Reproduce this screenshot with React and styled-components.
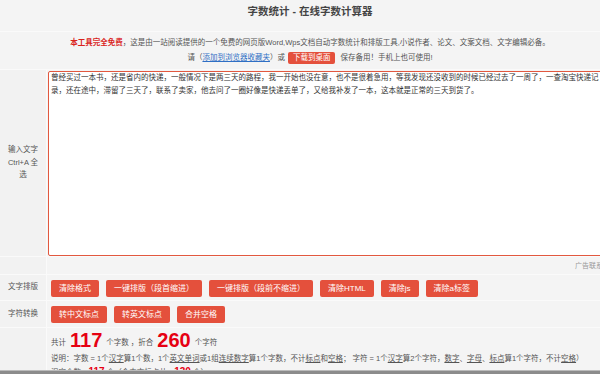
import React from 'react';
import styled, { createGlobalStyle } from 'styled-components';

const GlobalStyle = createGlobalStyle`
  html, body {
    margin: 0;
    padding: 0;
    overflow: hidden;
    background: #f4f4f4;
  }
  body {
    font-family: "Liberation Sans", "Noto Sans CJK SC", sans-serif;
    font-size: 7.5px;
    color: #555;
  }
`;

const Page = styled.div`
  width: 620px;
  background: #f4f4f4;
`;

const FullRow = styled.div`
  border-bottom: 1px solid #fafafa;
  text-align: center;
`;

const Title = styled.h1`
  margin: 0;
  height: 31px;
  padding-top: 5px;
  box-sizing: border-box;
  font-size: 10.5px;
  line-height: 13px;
  font-weight: bold;
  color: #444;
`;

const Notice = styled.div`
  padding: 3px 0 4px;
  line-height: 15px;
`;

const Free = styled.b`
  color: #d9231b;
`;

const FavLink = styled.a`
  color: #2f6fc4;
  text-decoration: underline;
`;

const SmallButton = styled.span`
  display: inline-block;
  margin: 0 5px 0 3px;
  padding: 0 5px;
  height: 12px;
  line-height: 12px;
  border-radius: 2px;
  background: #e4503c;
  color: #fff;
  vertical-align: middle;
`;

const Row = styled.div`
  display: grid;
  grid-template-columns: 47px 1fr;
  border-bottom: 1px solid #fafafa;
`;

const Label = styled.div`
  display: flex;
  align-items: center;
  justify-content: center;
  padding: 0 6px;
  border-right: 1px solid #fafafa;
  background: #f2f2f2;
  text-align: center;
  line-height: 12.5px;
  color: #555;
`;

const Cell = styled.div`
  padding: ${(p) => p.$pad || '5px 4px'};
  text-align: ${(p) => p.$align || 'left'};
`;

const InputBox = styled.textarea`
  display: block;
  width: 551px;
  height: 183px;
  margin: 1px 0 0 1px;
  padding: 0 22px 0 2px;
  border: 1px solid #e2583f;
  border-radius: 2px;
  background: #fff;
  font-family: "Liberation Sans", "Noto Sans CJK SC", sans-serif;
  font-size: 7.5px;
  line-height: 12.5px;
  color: #333;
  resize: none;
  outline: none;
  overflow: hidden;
`;

const AdNote = styled.span`
  color: #999;
  font-size: 7px;
  white-space: nowrap;
`;

const Buttons = styled.div`
  display: flex;
  gap: 7px;
`;

const Button = styled.button`
  height: 17px;
  padding: 0 8px;
  border: none;
  border-radius: 2px;
  background: #e4503c;
  color: #fff;
  font-family: "Liberation Sans", "Noto Sans CJK SC", sans-serif;
  font-size: 8px;
  line-height: 17px;
  white-space: nowrap;
`;

const Stats = styled.div`
  line-height: 21px;
  white-space: nowrap;
`;

const Big = styled.b`
  font-size: 20px;
  color: #e60012;
  margin: 0 4px;
  vertical-align: -2px;
`;

const Explain = styled.div`
  line-height: 12.5px;
  white-space: nowrap;
`;

const Under = styled.u`
  text-decoration: underline;
`;

const Mid = styled.b`
  font-size: 10px;
  color: #e60012;
`;

const BottomBar = styled.div`
  position: fixed;
  left: 0;
  right: 0;
  bottom: 0;
  height: 3px;
  border-top: 1px solid #bbb;
  background: #8c8c8c;
`;

const essay =
  '曾经买过一本书，还是省内的快递，一般情况下是两三天的路程，我一开始也没在意，也不是很着急用，等我发现还没收到的时候已经过去了一周了，一查淘宝快递记录，还在途中，滞留了三天了，联系了卖家，他去问了一圈好像是快递丢单了，又给我补发了一本，这本就是正常的三天到货了。';

const formatButtons = ['清除格式', '一键排版（段首缩进）', '一键排版（段前不缩进）', '清除HTML', '清除js', '清除a标签'];
const convertButtons = ['转中文标点', '转英文标点', '合并空格'];

export default function App() {
  return (
    <Page>
      <GlobalStyle />
      <FullRow>
        <Title>字数统计 - 在线字数计算器</Title>
      </FullRow>
      <FullRow>
        <Notice>
          <div>
            <Free>本工具完全免费</Free>，这是由一站阅读提供的一个免费的网页版Word,Wps文档自动字数统计和排版工具,小说作者、论文、文案文档、文字编辑必备。
          </div>
          <div>
            请（<FavLink>添加到浏览器收藏夹</FavLink>）或<SmallButton>下载到桌面</SmallButton>保存备用！手机上也可使用!
          </div>
        </Notice>
      </FullRow>
      <Row>
        <Label>输入文字 Ctrl+A 全选</Label>
        <Cell $pad="0">
          <InputBox defaultValue={essay} spellCheck={false} />
        </Cell>
      </Row>
      <Row>
        <Label />
        <Cell $pad="3px 17px 4px" $align="right">
          <AdNote>广告联系</AdNote>
        </Cell>
      </Row>
      <Row>
        <Label>文字排版</Label>
        <Cell $pad="5px 4px 3px">
          <Buttons>
            {formatButtons.map((b) => (
              <Button key={b}>{b}</Button>
            ))}
          </Buttons>
        </Cell>
      </Row>
      <Row>
        <Label>字符转换</Label>
        <Cell $pad="5px 4px 4px">
          <Buttons>
            {convertButtons.map((b) => (
              <Button key={b}>{b}</Button>
            ))}
          </Buttons>
        </Cell>
      </Row>
      <Row>
        <Label />
        <Cell $pad="2px 4px">
          <Stats>
            共计<Big>117</Big>个字数 ，折合<Big>260</Big>个字符
          </Stats>
          <Explain>
            说明：字数 = 1个<Under>汉字</Under>算1个数，1个<Under>英文单词</Under>或1组<Under>连续数字</Under>算1个字数，不计<Under>标点</Under>和<Under>空格</Under>；
            字符 = 1个<Under>汉字</Under>算2个字符，<Under>数字</Under>、<Under>字母</Under>、<Under>标点</Under>算1个字符，不计<Under>空格</Under>）
          </Explain>
          <Explain>
            汉字个数：<Mid>117</Mid> 个（含中文标点共：<Mid>130</Mid> 个）
          </Explain>
        </Cell>
      </Row>
      <BottomBar />
    </Page>
  );
}
